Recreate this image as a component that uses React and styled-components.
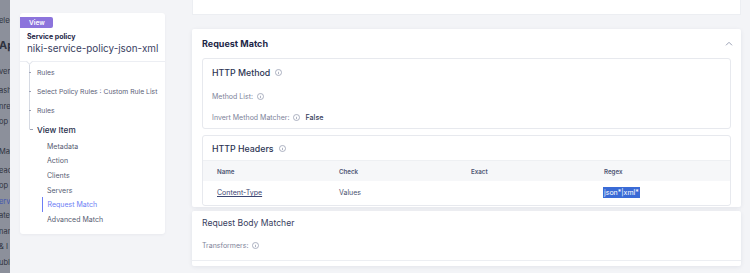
import React from 'react';
import styled, { createGlobalStyle } from 'styled-components';

const GlobalStyle = createGlobalStyle`
    html, body {
        margin: 0;
        padding: 0;
        width: 750px;
        height: 273px;
        overflow: hidden;
        background: #f3f4f7;
        font-family: Inter, "Noto Sans", sans-serif;
    }
`;

const Page = styled.div`
    display: flex;
    width: 750px;
    height: 273px;
    overflow: hidden;
`;

// BACKGROUND APP SIDEBAR UNDER THE OVERLAY
const Strip = styled.div`
    width: 10px;
    flex-shrink: 0;
    background: #8c909b;
    overflow: hidden;
    display: flex;
    flex-direction: column;
`;

const StripItem = styled.div`
    margin-top: ${p => p.$mt}px;
    margin-left: -1px;
    height: ${p => (p.$big ? 16 : 14)}px;
    line-height: ${p => (p.$big ? 16 : 14)}px;
    white-space: nowrap;
    font-size: ${p => (p.$big ? 11 : 7.5)}px;
    font-weight: ${p => (p.$big ? 700 : 400)};
    color: ${p => (p.$active ? '#4456b0' : '#2f3340')};
`;

const Drawer = styled.div`
    flex: 1;
    display: flex;
    padding-left: 10px;
    padding-right: 9px;
    gap: 27px;
    background: #f3f4f7;
`;

// LEFT NAV CARD
const NavCard = styled.div`
    width: 145px;
    flex-shrink: 0;
    margin-top: 13px;
    align-self: flex-start;
    background: #fff;
    border-radius: 3px;
    box-shadow: 0 1px 3px rgba(30, 40, 80, 0.05);
    padding-bottom: 7px;
`;

const NavHeader = styled.div`
    position: relative;
    padding-top: 4px;
    padding-bottom: 7px;
    border-bottom: 1px solid #eceef3;

    &::after {
        content: '';
        position: absolute;
        left: 7px;
        bottom: -3px;
        width: 4px;
        height: 4px;
        background: #fff;
        border-right: 1px solid #e3e6ec;
        border-bottom: 1px solid #e3e6ec;
        transform: rotate(45deg);
    }
`;

const Badge = styled.div`
    display: flex;
    align-items: center;
    width: fit-content;
    height: 11px;
    padding: 0 8px 0 9px;
    background: #8c74dc;
    color: #fff;
    font-size: 6.5px;
    font-weight: 600;
    border-radius: 0 2px 2px 0;
`;

const Kind = styled.div`
    margin-top: 4px;
    padding-left: 7px;
    height: 10px;
    line-height: 10px;
    font-size: 7px;
    font-weight: 700;
    color: #1d2647;
`;

const PolicyName = styled.div`
    padding-left: 7px;
    height: 12px;
    line-height: 12px;
    font-size: 9.9px;
    color: #3a4262;
    white-space: nowrap;
`;

const Tree = styled.div`
    padding-left: 9px;
    padding-top: 1px;
`;

const TreeRow = styled.div`
    display: flex;
    height: 19px;
    align-items: stretch;
`;

const Connector = styled.span`
    width: 8px;
    flex-shrink: 0;
    display: flex;
    align-items: center;
    background: linear-gradient(#d6dae3, #d6dae3) 0 0 / 1px ${p => (p.$last ? '50%' : '100%')} no-repeat;

    &::before {
        content: '';
        width: ${p => (p.$last ? 3 : 2)}px;
        height: 1px;
        margin-left: ${p => (p.$last ? 1 : 0)}px;
        background: #9ca2b5;
    }
`;

const TreeLabel = styled.span`
    display: flex;
    align-items: center;
    white-space: nowrap;
    font-size: ${p => (p.$strong ? 8.2 : 6.8)}px;
    font-weight: ${p => (p.$strong ? 500 : 400)};
    color: ${p => (p.$strong ? '#272e4b' : '#5c6178')};
`;

const SubList = styled.div`
    padding-left: 22px;
`;

const SubItem = styled.div`
    height: 14.6px;
    display: flex;
    align-items: center;
    padding-left: ${p => (p.$active ? 4.5 : 5)}px;
    border-left: ${p => (p.$active ? '1.5px solid #6d7ef5' : '0')};
    font-size: 7px;
    color: ${p => (p.$active ? '#6d7ef5' : '#565b72')};
    white-space: nowrap;
`;

// RIGHT CONTENT COLUMN
const Content = styled.div`
    flex: 1;
    display: flex;
    flex-direction: column;
`;

const PrevCard = styled.div`
    height: 15px;
    background: #fff;
    border: 1px solid #eceef2;
    border-top: 0;
    box-sizing: border-box;
    margin-bottom: 14px;
`;

const Card = styled.div`
    background: #fff;
    box-shadow: 0 1px 4px rgba(30, 40, 80, 0.08);
    border-radius: 2px;
`;

const CardHeader = styled.div`
    height: 29px;
    padding: 0 8px 0 10px;
    display: flex;
    align-items: center;
    justify-content: space-between;
`;

const CardTitle = styled.div`
    font-size: 9px;
    font-weight: 700;
    color: #1d2647;
`;

const CardBody = styled.div`
    padding: 0 10px 1px;
    display: flex;
    flex-direction: column;
    gap: 6px;
`;

const Panel = styled.div`
    border: 1px solid #e7e9ee;
    border-radius: 3px;
    height: ${p => p.$h}px;
    box-sizing: border-box;
    overflow: hidden;
`;

const PanelTitle = styled.div`
    height: ${p => p.$h}px;
    padding-left: 9px;
    display: flex;
    align-items: center;
    gap: 5px;
    font-size: 8.8px;
    font-weight: 500;
    color: #2d3553;
`;

const Field = styled.div`
    height: 21px;
    padding-left: ${p => p.$pad}px;
    display: flex;
    align-items: center;
    gap: 4px;
    font-size: 7px;
    color: #7d8399;
`;

const FieldValue = styled.span`
    margin-left: 1px;
    color: #363d5a;
    font-weight: 500;
    font-size: 7.2px;
`;

const TableRow = styled.div`
    display: grid;
    grid-template-columns: 122px 132px 133px 1fr;
    align-items: center;
    padding-left: 14px;
    height: ${p => p.$h}px;
    background: ${p => (p.$head ? '#f6f7f9' : '#fff')};
    border-top: ${p => (p.$head ? '1px solid #eef0f3' : '0')};
    font-size: ${p => (p.$head ? 6.2 : 7)}px;
    font-weight: ${p => (p.$head ? 600 : 400)};
    color: ${p => (p.$head ? '#4d5471' : '#4a5170')};
`;

const NameLink = styled.span`
    color: #3b4572;
    text-decoration: underline;
    text-underline-offset: 1px;
`;

const Selected = styled.span`
    justify-self: start;
    margin-left: -1px;
    padding: 1px 1px;
    background: #3a6bd6;
    color: #fff;
`;

const Gap = styled.div`
    height: 4px;
`;

const SectionTitle = styled.div`
    height: 24px;
    padding-left: 10px;
    display: flex;
    align-items: center;
    font-size: 8.6px;
    color: #384060;
`;

const SectionFoot = styled.div`
    padding-bottom: 4px;
    border-bottom: 1px solid #eceef2;
    margin-bottom: 5px;
`;

const InfoIcon = () => (
    <svg width="7" height="7" viewBox="0 0 12 12" fill="none" stroke="#8d93a9" strokeWidth="1.2">
        <circle cx="6" cy="6" r="5.2" />
        <line x1="6" y1="5.2" x2="6" y2="8.8" />
        <circle cx="6" cy="3.4" r="0.5" fill="#8d93a9" stroke="none" />
    </svg>
);

const ChevronUp = () => (
    <svg width="8" height="5" viewBox="0 0 8 5" fill="none" stroke="#9aa0b4" strokeWidth="1">
        <path d="M1 4.3 L4 1.3 L7 4.3" />
    </svg>
);

const stripItems = [
    ['elec', 14], ['Apps', 9, 'big'], ['vervi', 12], ['ashb', 5], ['nre', 2], ['op T', 1],
    ['Man', 16], ['ead', 5], ['op I', 1], ['ervi', 2, 'active'], ['ate', 0], ['nan', 2],
    ['& I', 1], ['ubli', 2],
];

const treeItems = ['Rules', 'Select Policy Rules : Custom Rule List', 'Rules'];
const subItems = ['Metadata', 'Action', 'Clients', 'Servers', 'Request Match', 'Advanced Match'];

const App = () => {
    return (
        <>
            <GlobalStyle />
            <Page>
                <Strip>
                    {stripItems.map(([text, mt, kind], i) => (
                        <StripItem key={i} $mt={mt} $big={kind === 'big'} $active={kind === 'active'}>{text}</StripItem>
                    ))}
                </Strip>

                <Drawer>
                    <NavCard>
                        <NavHeader>
                            <Badge>View</Badge>
                            <Kind>Service policy</Kind>
                            <PolicyName>niki-service-policy-json-xml</PolicyName>
                        </NavHeader>
                        <Tree>
                            {treeItems.map((t, i) => (
                                <TreeRow key={i}>
                                    <Connector />
                                    <TreeLabel>{t}</TreeLabel>
                                </TreeRow>
                            ))}
                            <TreeRow>
                                <Connector $last />
                                <TreeLabel $strong>View Item</TreeLabel>
                            </TreeRow>
                        </Tree>
                        <SubList>
                            {subItems.map(s => (
                                <SubItem key={s} $active={s === 'Request Match'}>{s}</SubItem>
                            ))}
                        </SubList>
                    </NavCard>

                    <Content>
                        <PrevCard />
                        <Card>
                            <CardHeader>
                                <CardTitle>Request Match</CardTitle>
                                <ChevronUp />
                            </CardHeader>
                            <CardBody>
                                <Panel $h={71}>
                                    <PanelTitle $h={27}>HTTP Method <InfoIcon /></PanelTitle>
                                    <Field $pad={9}>Method List: <InfoIcon /></Field>
                                    <Field $pad={9}>Invert Method Matcher: <InfoIcon /><FieldValue>False</FieldValue></Field>
                                </Panel>
                                <Panel $h={71}>
                                    <PanelTitle $h={24}>HTTP Headers <InfoIcon /></PanelTitle>
                                    <TableRow $head $h={20}>
                                        <span>Name</span>
                                        <span>Check</span>
                                        <span>Exact</span>
                                        <span>Regex</span>
                                    </TableRow>
                                    <TableRow $h={23}>
                                        <NameLink>Content-Type</NameLink>
                                        <span>Values</span>
                                        <span></span>
                                        <Selected>json*|xml*</Selected>
                                    </TableRow>
                                </Panel>
                            </CardBody>
                        </Card>
                        <Gap />
                        <Card>
                            <SectionTitle>Request Body Matcher</SectionTitle>
                            <SectionFoot>
                                <Field $pad={10}>Transformers: <InfoIcon /></Field>
                            </SectionFoot>
                        </Card>
                    </Content>
                </Drawer>
            </Page>
        </>
    );
};

export default App;
